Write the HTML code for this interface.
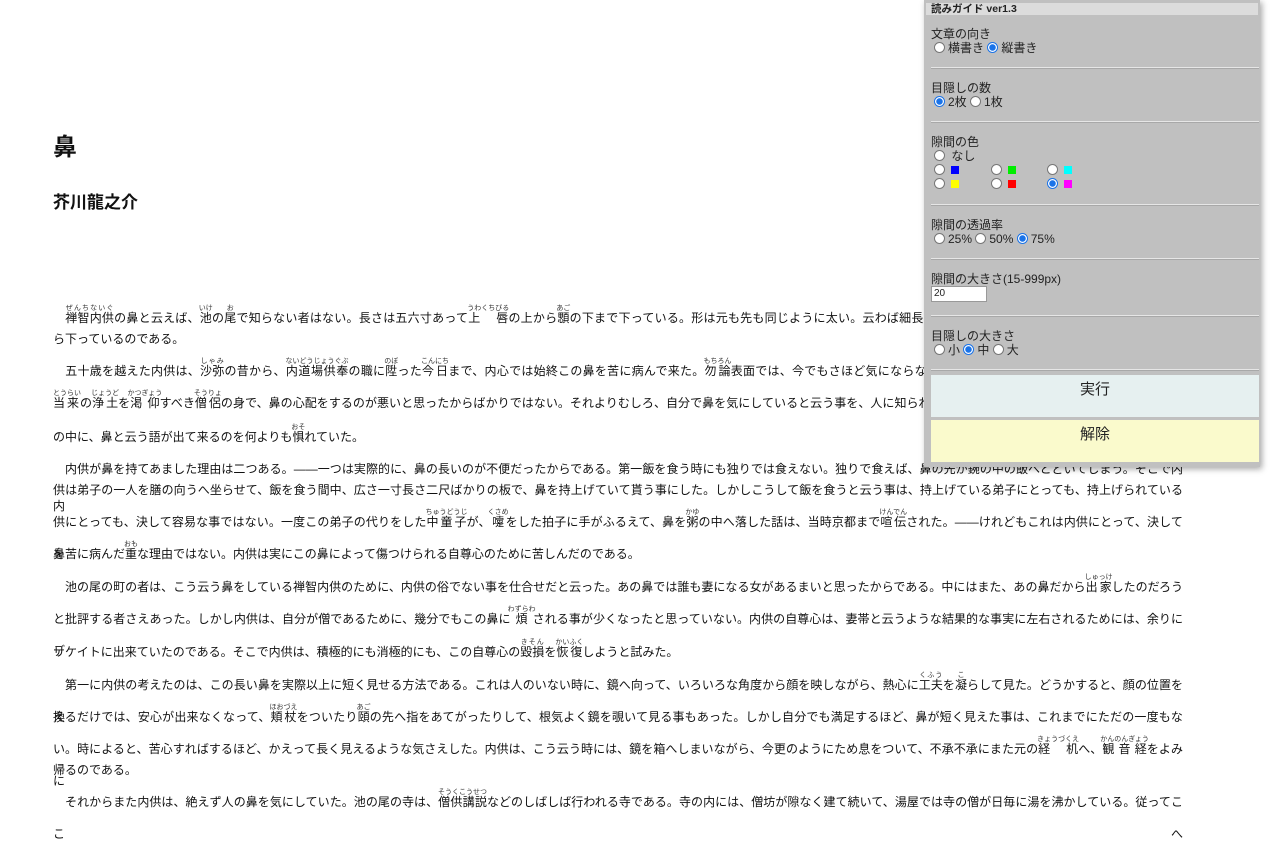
<!DOCTYPE html>
<html lang="ja"><head><meta charset="utf-8">
<style>
body{margin:0;width:1280px;height:800px;overflow:hidden;background:#fff;font-family:"Liberation Sans","Noto Sans CJK JP",sans-serif;color:#111;position:relative}
.h1{position:absolute;left:53px;top:127px;font-size:24px;font-weight:bold}
.h2{position:absolute;left:53px;top:188px;font-size:17px;font-weight:bold}
.l{position:absolute;left:53px;width:1130px;font-size:12px;line-height:16px;white-space:nowrap}
.j{text-align:justify;text-align-last:justify;white-space:normal;height:16px;overflow:visible}
ruby{ruby-position:over}
rt{font-size:7px;color:#333}
.p{position:absolute;left:924px;top:0;width:336px;height:467px;background:#c0c0c0;box-shadow:2px 2px 6px rgba(0,0,0,.35);font-size:12px;color:#222}
.p .t{position:absolute;left:2px;top:3px;width:332px;height:12px;background:#dcdcdc;font-size:10.5px;font-weight:bold;line-height:12px;padding-left:5px;box-sizing:border-box}
.p .a{position:absolute;white-space:nowrap;line-height:14px}
.hr{position:absolute;left:7px;width:328px;height:0;border-top:1px solid #e6e6e6;border-bottom:1px solid #a8a8a8}
.r{display:inline-block;width:9px;height:9px;border:1px solid #777;border-radius:50%;background:#fff;vertical-align:-1px;margin-right:3px;box-sizing:content-box}
.r.c{border-color:#1a73e8;background:radial-gradient(circle,#1a73e8 0 3px,#fff 3.5px)}
.sw{display:inline-block;width:8px;height:8px;vertical-align:0px}
.btn{position:absolute;left:7px;width:328px;height:42px;font-size:15px;text-align:center;line-height:30px}
</style></head><body>
<div class="h1">鼻</div>
<div class="h2">芥川龍之介</div>

<div class="l j" style="top:302px;line-height:32px;height:32px">　<ruby>禅智内供<rt>ぜんちないぐ</rt></ruby>の鼻と云えば、<ruby>池<rt>いけ</rt></ruby>の<ruby>尾<rt>お</rt></ruby>で知らない者はない。長さは五六寸あって<ruby>上　唇<rt>うわくちびる</rt></ruby>の上から<ruby>顋<rt>あご</rt></ruby>の下まで下っている。形は元も先も同じように太い。云わば細長い<ruby>腸<rt>ちょう</rt></ruby>詰めのような物が、ぶらりと顔のまん中か</div>
<div class="l" style="top:331px">ら下っているのである。</div>
<div class="l j" style="top:355px;line-height:32px;height:32px">　五十歳を越えた内供は、<ruby>沙弥<rt>しゃみ</rt></ruby>の昔から、<ruby>内道場供奉<rt>ないどうじょうぐぶ</rt></ruby>の職に<ruby>陞<rt>のぼ</rt></ruby>った<ruby>今日<rt>こんにち</rt></ruby>まで、内心では始終この鼻を苦に病んで来た。<ruby>勿論<rt>もちろん</rt></ruby>表面では、今でもさほど気にならないような顔をしてすましている。これは専念に</div>
<div class="l j" style="top:387px;line-height:32px;height:32px"><ruby>当来<rt>とうらい</rt></ruby>の<ruby>浄土<rt>じょうど</rt></ruby>を<ruby>渇仰<rt>かつぎょう</rt></ruby>すべき<ruby>僧侶<rt>そうりょ</rt></ruby>の身で、鼻の心配をするのが悪いと思ったからばかりではない。それよりむしろ、自分で鼻を気にしていると云う事を、人に知られるのが嫌だったからである。内供は日常の談話</div>
<div class="l" style="top:421px;line-height:32px;height:32px">の中に、鼻と云う語が出て来るのを何よりも<ruby>惧<rt>おそ</rt></ruby>れていた。</div>
<div class="l j" style="top:461px">　内供が鼻を持てあました理由は二つある。――一つは実際的に、鼻の長いのが不便だったからである。第一飯を食う時にも独りでは食えない。独りで食えば、鼻の先が鋺の中の飯へとどいてしまう。そこで内</div>
<div class="l j" style="top:482px">供は弟子の一人を膳の向うへ坐らせて、飯を食う間中、広さ一寸長さ二尺ばかりの板で、鼻を持上げていて貰う事にした。しかしこうして飯を食うと云う事は、持上げている弟子にとっても、持上げられている内</div>
<div class="l j" style="top:506px;line-height:32px;height:32px">供にとっても、決して容易な事ではない。一度この弟子の代りをした<ruby>中童子<rt>ちゅうどうじ</rt></ruby>が、<ruby>嚔<rt>くさめ</rt></ruby>をした拍子に手がふるえて、鼻を<ruby>粥<rt>かゆ</rt></ruby>の中へ落した話は、当時京都まで<ruby>喧伝<rt>けんでん</rt></ruby>された。――けれどもこれは内供にとって、決して鼻</div>
<div class="l" style="top:538px;line-height:32px;height:32px">を苦に病んだ<ruby>重<rt>おも</rt></ruby>な理由ではない。内供は実にこの鼻によって傷つけられる自尊心のために苦しんだのである。</div>
<div class="l j" style="top:571px;line-height:32px;height:32px">　池の尾の町の者は、こう云う鼻をしている禅智内供のために、内供の俗でない事を仕合せだと云った。あの鼻では誰も妻になる女があるまいと思ったからである。中にはまた、あの鼻だから<ruby>出家<rt>しゅっけ</rt></ruby>したのだろう</div>
<div class="l j" style="top:603px;line-height:32px;height:32px">と批評する者さえあった。しかし内供は、自分が僧であるために、幾分でもこの鼻に<ruby>煩<rt>わずらわ</rt></ruby>される事が少くなったと思っていない。内供の自尊心は、妻帯と云うような結果的な事実に左右されるためには、余りにデ</div>
<div class="l" style="top:636px;line-height:32px;height:32px">リケイトに出来ていたのである。そこで内供は、積極的にも消極的にも、この自尊心の<ruby>毀損<rt>きそん</rt></ruby>を<ruby>恢復<rt>かいふく</rt></ruby>しようと試みた。</div>
<div class="l j" style="top:669px;line-height:32px;height:32px">　第一に内供の考えたのは、この長い鼻を実際以上に短く見せる方法である。これは人のいない時に、鏡へ向って、いろいろな角度から顔を映しながら、熱心に<ruby>工夫<rt>くふう</rt></ruby>を<ruby>凝<rt>こ</rt></ruby>らして見た。どうかすると、顔の位置を換</div>
<div class="l j" style="top:701px;line-height:32px;height:32px">えるだけでは、安心が出来なくなって、<ruby>頬杖<rt>ほおづえ</rt></ruby>をついたり<ruby>頤<rt>あご</rt></ruby>の先へ指をあてがったりして、根気よく鏡を覗いて見る事もあった。しかし自分でも満足するほど、鼻が短く見えた事は、これまでにただの一度もな</div>
<div class="l j" style="top:733px;line-height:32px;height:32px">い。時によると、苦心すればするほど、かえって長く見えるような気さえした。内供は、こう云う時には、鏡を箱へしまいながら、今更のようにため息をついて、不承不承にまた元の<ruby>経　机<rt>きょうづくえ</rt></ruby>へ、<ruby>観音経<rt>かんのんぎょう</rt></ruby>をよみに</div>
<div class="l" style="top:762px">帰るのである。</div>
<div class="l j" style="top:786px;line-height:32px;height:32px">　それからまた内供は、絶えず人の鼻を気にしていた。池の尾の寺は、<ruby>僧供講説<rt>そうくこうせつ</rt></ruby>などのしばしば行われる寺である。寺の内には、僧坊が隙なく建て続いて、湯屋では寺の僧が日毎に湯を沸かしている。従ってここへ</div>

<div class="p">
<div class="t">読みガイド ver1.3</div>
<div class="a" style="left:7px;top:27px">文章の向き</div>
<div class="a" style="left:10px;top:41px"><span class="r"></span>横書き <span class="r c"></span>縦書き</div>
<div class="hr" style="top:67px"></div>
<div class="a" style="left:7px;top:81px">目隠しの数</div>
<div class="a" style="left:10px;top:95px"><span class="r c"></span>2枚 <span class="r"></span>1枚</div>
<div class="hr" style="top:121px"></div>
<div class="a" style="left:7px;top:135px">隙間の色</div>
<div class="a" style="left:10px;top:149px"><span class="r"></span> なし</div>
<div class="a" style="left:10px;top:163px"><span class="r"></span> <span class="sw" style="background:#0000ff"></span></div>
<div class="a" style="left:67px;top:163px"><span class="r"></span> <span class="sw" style="background:#00ee00"></span></div>
<div class="a" style="left:123px;top:163px"><span class="r"></span> <span class="sw" style="background:#00ffff"></span></div>
<div class="a" style="left:10px;top:177px"><span class="r"></span> <span class="sw" style="background:#ffff00"></span></div>
<div class="a" style="left:67px;top:177px"><span class="r"></span> <span class="sw" style="background:#ff0000"></span></div>
<div class="a" style="left:123px;top:177px"><span class="r c"></span> <span class="sw" style="background:#ff00ff"></span></div>
<div class="hr" style="top:204px"></div>
<div class="a" style="left:7px;top:218px">隙間の透過率</div>
<div class="a" style="left:10px;top:232px"><span class="r"></span>25% <span class="r"></span>50% <span class="r c"></span>75%</div>
<div class="hr" style="top:258px"></div>
<div class="a" style="left:7px;top:272px">隙間の大きさ(15-999px)</div>
<div style="position:absolute;left:7px;top:286px;width:52px;height:14px;background:#fff;border:1px solid #999;font-size:10px;line-height:14px;padding-left:2px;box-sizing:content-box">20</div>
<div class="hr" style="top:315px"></div>
<div class="a" style="left:7px;top:329px">目隠しの大きさ</div>
<div class="a" style="left:10px;top:343px"><span class="r"></span>小 <span class="r c"></span>中 <span class="r"></span>大</div>
<div class="hr" style="top:369px"></div>
<div class="btn" style="top:375px;background:#e6f0f0">実行</div>
<div class="btn" style="top:420px;background:#fafacc">解除</div>
</div>
</body></html>
